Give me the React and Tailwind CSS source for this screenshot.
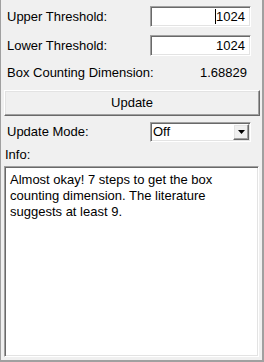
import React from "react";

const sunken =
  "border border-t-[#a0a0a0] border-l-[#a0a0a0] border-b-white border-r-white shadow-[inset_1px_1px_0_#696969,inset_-1px_-1px_0_#e3e3e3]";
const raised =
  "border border-t-white border-l-white border-b-[#696969] border-r-[#696969] shadow-[inset_-1px_-1px_0_#a0a0a0,inset_1px_1px_0_#e3e3e3]";

const Field = ({ label, value, caret }) => (
  <div className="flex items-center justify-between h-[21px]">
    <span className="pl-[3px]">{label}</span>
    <div
      className={`w-[101px] h-[21px] mr-[9px] bg-white flex items-center justify-end pr-[5px] ${sunken}`}
    >
      {caret && <span className="w-px h-[15px] bg-black" />}
      <span>{value}</span>
    </div>
  </div>
);

export default function App() {
  return (
    <div
      className="w-[264px] h-[362px] bg-[#f0f0f0] border-l border-r-2 border-b-2 border-[#a0a0a0] flex flex-col pl-[3px] pr-[2px] text-[13px] text-black"
      style={{ fontFamily: '"Liberation Sans", Arial, sans-serif' }}
    >
      <div className="mt-[6px]">
        <Field label="Upper Threshold:" value="1024" caret />
      </div>
      <div className="mt-[8px]">
        <Field label="Lower Threshold:" value="1024" />
      </div>

      {/* dimension readout */}
      <div className="mt-[9px] h-[16px] flex items-center justify-between">
        <span className="pl-[3px]">Box Counting Dimension:</span>
        <span className="mr-[13px]">1.68829</span>
      </div>

      <button
        type="button"
        className={`mt-[9px] w-[256px] h-[26px] bg-[#f0f0f0] flex items-center justify-center ${raised}`}
      >
        Update
      </button>

      <div className="mt-[6px] flex items-center justify-between h-[20px]">
        <span className="pl-[3px]">Update Mode:</span>
        <div
          className={`w-[101px] h-[20px] mr-[9px] bg-white flex items-center justify-between pl-[2px] pr-[1px] ${sunken}`}
        >
          <span>Off</span>
          <div
            className={`w-[16px] h-[16px] bg-[#f0f0f0] flex items-center justify-center ${raised}`}
          >
            <svg width="7" height="4" viewBox="0 0 7 4">
              <path d="M0 0h7L3.5 4z" fill="#000" />
            </svg>
          </div>
        </div>
      </div>

      <div className="mt-[6px] h-[14px] flex items-center">
        <span className="pl-[1px]">Info:</span>
      </div>

      <div
        className={`mt-[4px] w-[255px] h-[191px] bg-white pl-[5px] pt-[5px] pr-[4px] leading-[16px] ${sunken}`}
      >
        Almost okay! 7 steps to get the box counting dimension. The literature
        suggests at least 9.
      </div>
    </div>
  );
}
